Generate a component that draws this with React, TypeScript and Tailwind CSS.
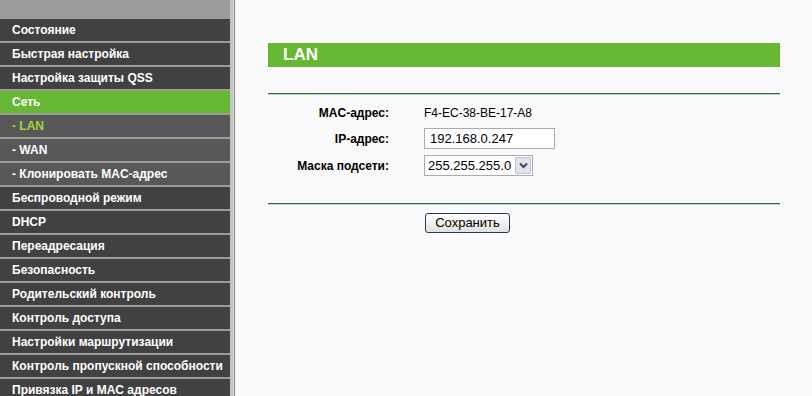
import React from "react";

type Item = { label: string; kind?: "active" | "sub" | "subActive" };

const menu: Item[] = [
  { label: "Состояние" },
  { label: "Быстрая настройка" },
  { label: "Настройка защиты QSS" },
  { label: "Сеть", kind: "active" },
  { label: "- LAN", kind: "subActive" },
  { label: "- WAN", kind: "sub" },
  { label: "- Клонировать MAC-адрес", kind: "sub" },
  { label: "Беспроводной режим" },
  { label: "DHCP" },
  { label: "Переадресация" },
  { label: "Безопасность" },
  { label: "Родительский контроль" },
  { label: "Контроль доступа" },
  { label: "Настройки маршрутизации" },
  { label: "Контроль пропускной способности" },
  { label: "Привязка IP и MAC адресов" },
];

function itemClass(kind?: Item["kind"]) {
  if (kind === "active") return "bg-[#66b832] text-white";
  if (kind === "subActive") return "bg-[#585858] text-[#a3d43c]";
  if (kind === "sub") return "bg-[#585858] text-white";
  return "bg-[#414141] text-white";
}

function Label({ children }: { children: React.ReactNode }) {
  return <div className="text-right text-[12px] font-bold text-black">{children}</div>;
}

export default function App() {
  return (
    <div className="flex h-[396px] w-[812px] overflow-hidden font-['Liberation_Sans',Arial,sans-serif]">
      <aside className="flex w-[230px] shrink-0 flex-col gap-[2px] bg-[#9b9b9b] pt-[19px]">
        {menu.map((m) => (
          <div
            key={m.label}
            className={`h-[22px] shrink-0 whitespace-nowrap pl-[12px] text-[12px] font-bold leading-[22px] ${itemClass(m.kind)}`}
          >
            {m.label}
          </div>
        ))}
      </aside>
      <div className="w-[3px] shrink-0 bg-[#c4c4c4]" />
      <div className="w-[1px] shrink-0 bg-[#dcdcdc]" />
      <div className="w-[1px] shrink-0 bg-[#8a8a8a]" />

      <main className="flex-1 bg-[#fafafa] pl-[33px]">
        <div className="w-[512px]">
          <div className="mt-[43px] flex h-[24px] items-center bg-[#66b832] pl-[15px] text-[17px] font-bold text-white">
            LAN
          </div>
          <div className="mt-[26px] h-[2px] border-t border-b border-t-[#2e6b40] border-b-[#bcd3c0]" />

          <div className="grid grid-cols-[121px_1fr] gap-x-[35px]">
            <div className="mt-[7px] flex h-[22px] items-center justify-end">
              <Label>MAC-адрес:</Label>
            </div>
            <div className="mt-[7px] flex h-[22px] items-center text-[12px] text-black">F4-EC-38-BE-17-A8</div>

            <div className="mt-[4px] flex h-[21px] items-center justify-end">
              <Label>IP-адрес:</Label>
            </div>
            <div className="mt-[4px] flex h-[21px] w-[131px] items-center border border-[#a5acb2] bg-white pl-[5px] text-[13px] text-black">
              192.168.0.247
            </div>

            <div className="mt-[6px] flex h-[21px] items-center justify-end">
              <Label>Маска подсети:</Label>
            </div>
            <div className="mt-[6px] flex h-[21px] w-[109px] items-stretch border border-[#a5acb2] bg-white text-[13px] text-black">
              <div className="flex flex-1 items-center pl-[3px]">255.255.255.0</div>
              <div className="m-[1px] flex w-[16px] items-center justify-center rounded-[2px] border border-[#b9c3d6] bg-[#dfe4ee]">
                <svg width="9" height="7" viewBox="0 0 9 7">
                  <path d="M1 1.5 L4.5 5 L8 1.5" fill="none" stroke="#3c4a66" strokeWidth="2" />
                </svg>
              </div>
            </div>
          </div>

          <div className="mt-[27px] h-[2px] border-t border-b border-t-[#2e6b40] border-b-[#bcd3c0]" />

          <div className="ml-[157px] mt-[8px]">
            <button className="flex h-[20px] w-[85px] items-center justify-center rounded-[3px] border border-[#1b3c6e] bg-gradient-to-b from-white to-[#e2e2dc] text-[13px] text-black">
              Сохранить
            </button>
          </div>
        </div>
      </main>
    </div>
  );
}
